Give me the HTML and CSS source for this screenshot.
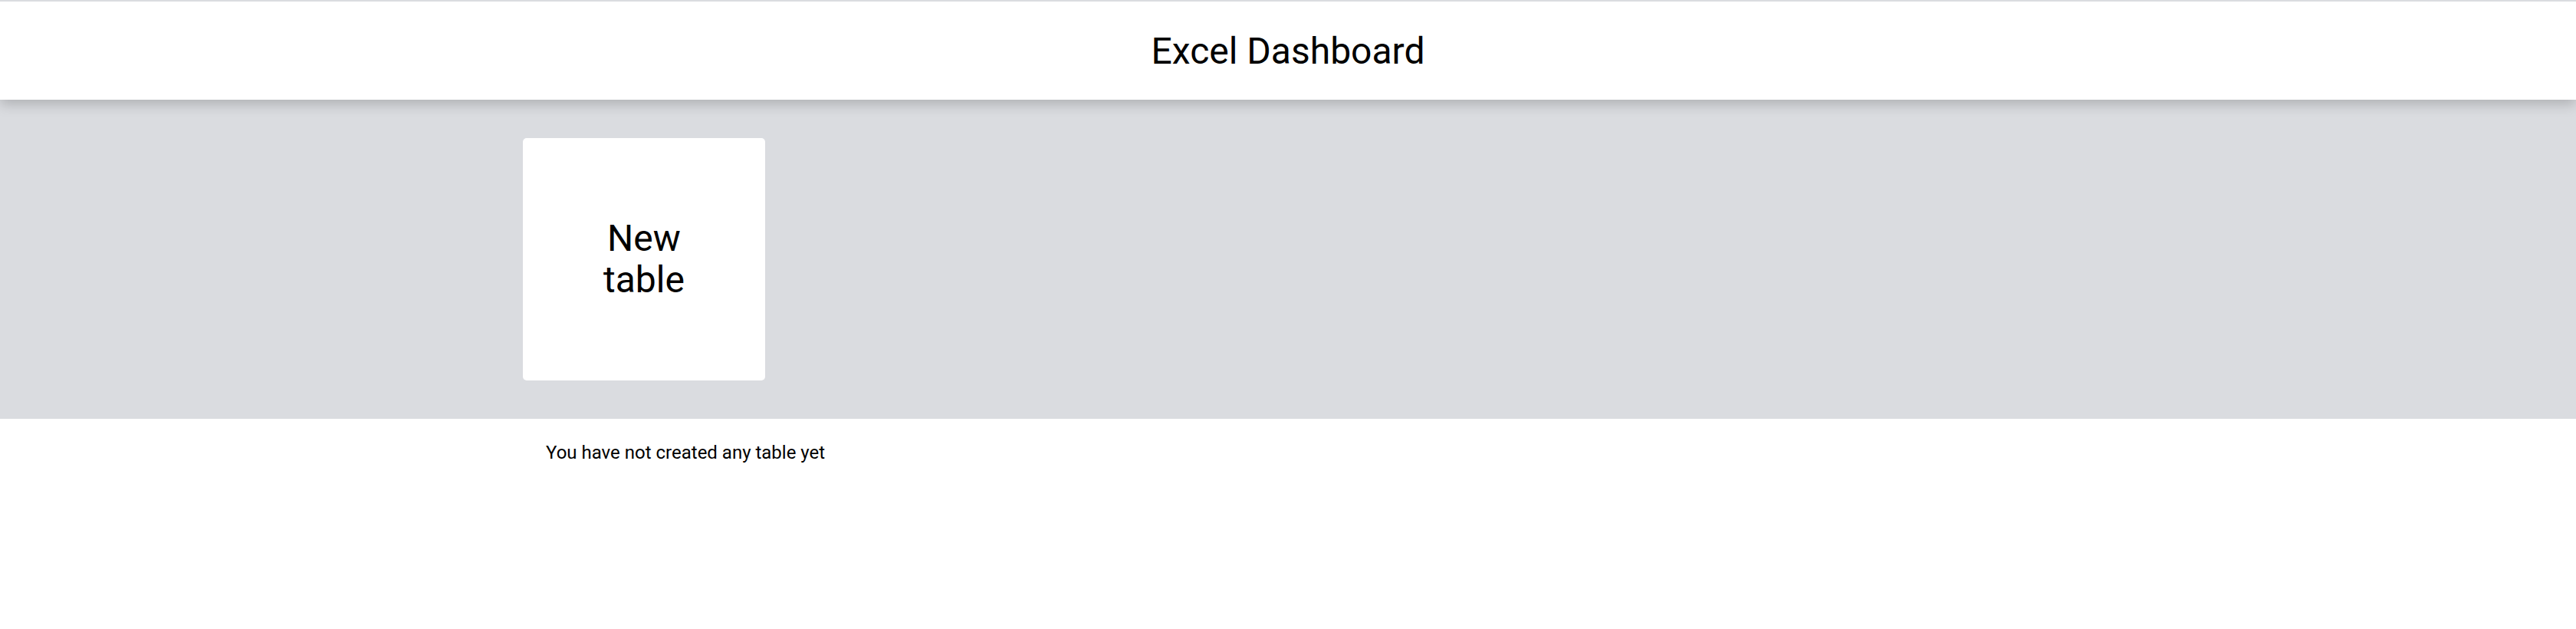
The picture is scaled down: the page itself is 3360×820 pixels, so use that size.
FILE: index.html
```html
<!DOCTYPE html>
<html lang="en">
<head>
<meta charset="utf-8">
<title>Excel Dashboard</title>
<link rel="stylesheet" href="styles.css">
</head>
<body>
<header class="header">
  <h1 class="title">Excel Dashboard</h1>
</header>
<section class="create">
  <div class="container">
    <div class="card">
      <span class="card-label">New table</span>
    </div>
  </div>
</section>
<section class="list">
  <div class="container">
    <p class="empty">You have not created any table yet</p>
  </div>
</section>
</body>
</html>
```
FILE: styles.css
```css
* { box-sizing: border-box; }
html, body { margin: 0; padding: 0; background: #fff; }
body {
  font-family: Roboto, "Noto Sans", Arial, sans-serif;
  color: #000;
}
.header {
  position: relative;
  z-index: 1;
  height: 130px;
  border-top: 2px solid #dadce0;
  background: #fff;
  display: flex;
  align-items: center;
  justify-content: center;
  box-shadow: 0 6px 16px rgba(0, 0, 0, 0.2);
}
.title {
  margin: 0;
  font-size: 48px;
  font-weight: 400;
}
.create {
  background: #dadce0;
  padding: 50px 0;
}
.container {
  width: 1996px;
  margin: 0 auto;
}
.card {
  width: 316px;
  height: 316px;
  background: #fff;
  border-radius: 5px;
  display: flex;
  align-items: center;
  justify-content: center;
}
.card-label {
  width: min-content;
  text-align: center;
  font-size: 48px;
  line-height: 54px;
}
.list .container {
  padding: 0 30px;
}
.empty {
  margin: 30px 0 0;
  font-size: 24px;
}
```
